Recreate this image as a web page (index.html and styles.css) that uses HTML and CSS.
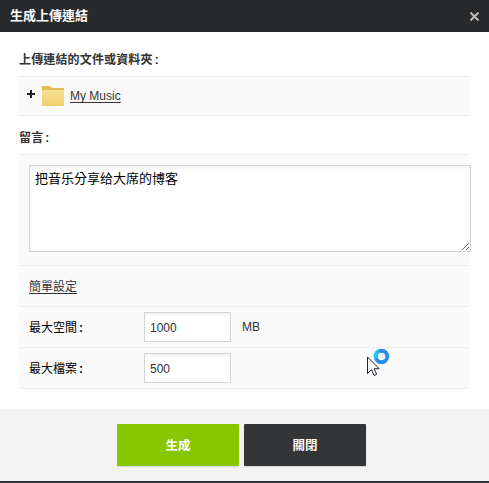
FILE: index.html
```html
<!DOCTYPE html>
<html lang="zh-Hant">
<head>
<meta charset="utf-8">
<title>生成上傳連結</title>
<link rel="stylesheet" href="styles.css">
</head>
<body>
<div class="dialog">
  <header class="titlebar">
    <h1 class="title">生成上傳連結</h1>
    <svg class="close" width="9" height="9" viewBox="0 0 9 9"><path d="M.5.5l8 8M8.5.5l-8 8"/></svg>
  </header>
  <main class="content">
    <h2 class="label">上傳連結的文件或資料夾<span class="colon">:</span></h2>
    <div class="row files">
      <svg class="plus" width="8" height="8" viewBox="0 0 8 8"><path d="M4 0v8M0 4h8"/></svg>
      <svg class="folder" width="22" height="20" viewBox="0 0 22 20">
        <defs><linearGradient id="front" x1="0" y1="0" x2="0" y2="1"><stop offset="0" stop-color="#f8df98"/><stop offset="1" stop-color="#f0cf6c"/></linearGradient></defs>
        <path d="M0 1q0-1 1-1h7l2 2h11q1 0 1 1v3H0z" fill="#e3bc52"/>
        <path d="M0 4h22v15q0 1-1 1H1q-1 0-1-1z" fill="url(#front)"/>
      </svg>
      <a class="link">My Music</a>
    </div>
    <h2 class="label message-label">留言<span class="colon">:</span></h2>
    <div class="row message">
      <textarea class="field textarea" spellcheck="false">把音乐分享给大席的博客</textarea>
    </div>
    <div class="row setting"><a class="link simple">簡單設定</a></div>
    <div class="row setting">
      <label class="name">最大空間<span class="colon">:</span></label>
      <input class="field input" value="1000">
      <span class="unit">MB</span>
    </div>
    <div class="row setting last">
      <label class="name">最大檔案<span class="colon">:</span></label>
      <input class="field input" value="500">
    </div>
    <svg class="cursor" width="24" height="29" viewBox="0 0 24 29">
      <path d="M1.5 9v16.5l4-3.8 2.6 5.8 2.6-1.2-2.6-5.6h5z" fill="#fff" stroke="#222433"/>
      <circle cx="15.5" cy="8.5" r="5.8" fill="#f4f4f4" stroke="#2b8fea" stroke-width="4"/>
      <path d="M10 10.5a5.8 5.8 0 0 1 3-7.3" fill="none" stroke="#22c4ff" stroke-width="4"/>
    </svg>
  </main>
  <footer class="footer">
    <button class="button primary">生成</button>
    <button class="button">關閉</button>
  </footer>
</div>
</body>
</html>
```
FILE: styles.css
```css
* { box-sizing: border-box; }
body {
  margin: 0;
  background: #fff;
  color: #333;
  font: 12px/16px "Liberation Sans", "Noto Sans CJK TC", sans-serif;
}
.dialog {
  display: flex;
  flex-direction: column;
  height: 483px;
  border-bottom: 2px solid #343537;
}
.titlebar {
  display: flex;
  align-items: center;
  justify-content: space-between;
  height: 32px;
  padding: 0 10px;
  background: #28292b;
}
.title { margin: 0; color: #fff; font-size: 13px; line-height: 16px; }
.close { fill: none; stroke: #bbb; stroke-width: 2; }
.content { position: relative; flex: 1; padding: 0 20px 0 19px; }
.label {
  height: 44px;
  margin: 0;
  padding-top: 20px;
  font-size: 12px;
  line-height: 16px;
  letter-spacing: .15px;
}
.message-label { height: 38px; padding-top: 14px; }
.colon { margin-left: 2px; font-weight: bold; }
.row { background: #fafafa; border-top: 1px solid #eee; }
.files {
  display: flex;
  align-items: center;
  height: 40px;
  padding: 0 8px;
  border-bottom: 1px solid #eee;
}
.plus { margin: 0 7px 4px 0; stroke: #222; stroke-width: 2; }
.folder { margin-right: 6px; }
.link { color: #333; text-decoration: underline; text-underline-offset: 2px; }
.message { height: 111px; padding: 10px 0 0 10px; }
.field {
  display: block;
  border: 1px solid #d3d4d4;
  background: #fff;
  box-shadow: inset 0 2px 3px #0000000f;
  outline: 0;
}
.textarea {
  width: 442px;
  height: 87px;
  padding: 4px 5px;
  color: #000;
  font: 13px/16px "Noto Sans CJK SC", sans-serif;
  resize: both;
}
.setting {
  display: flex;
  align-items: center;
  height: 41px;
  padding-left: 10px;
}
.last { height: 42px; border-bottom: 1px solid #eee; }
.name { width: 115px; padding-top: 1px; color: #000; }
.simple { padding-top: 1px; }
.input {
  width: 87px;
  height: 30px;
  padding: 1px 5px 0;
  color: #333;
  font: 12px "Liberation Sans", sans-serif;
}
.unit { margin-left: 11px; }
.cursor { position: absolute; left: 366px; top: 316px; }
.footer {
  display: flex;
  gap: 5px;
  height: 72px;
  padding: 15px 0 0 117px;
  background: #f3f3f3;
}
.button {
  width: 122px;
  height: 42px;
  padding: 0 0 2px;
  border: 0;
  border-radius: 1px;
  background: #343537;
  box-shadow: 0 1px 1px #0002;
  color: #fff;
  font: bold 12.5px "Noto Sans CJK TC", sans-serif;
}
.primary { background: #87c700; }
```
